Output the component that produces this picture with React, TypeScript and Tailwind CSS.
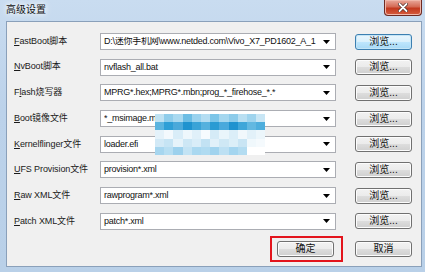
import React from 'react';

type Row = { label: string; key: number; value: string };

const rows: Row[] = [
  { label: 'FastBoot脚本', key: 0, value: 'D:\\迷你手机网\\www.netded.com\\Vivo_X7_PD1602_A_1' },
  { label: 'NvBoot脚本', key: 0, value: 'nvflash_all.bat' },
  { label: 'Flash烧写器', key: 1, value: 'MPRG*.hex;MPRG*.mbn;prog_*_firehose_*.*' },
  { label: 'Boot镜像文件', key: 0, value: '*_msimage.ml' },
  { label: 'Kernelflinger文件', key: 0, value: 'loader.efi' },
  { label: 'UFS Provision文件', key: 0, value: 'provision*.xml' },
  { label: 'Raw XML文件', key: 0, value: 'rawprogram*.xml' },
  { label: 'Patch XML文件', key: 0, value: 'patch*.xml' },
];

// mosaic over the blurred part of the picture
const mosaic = [
  ['#bfe2f3', '#8fcdeb', '#a9d9f0', '#6cbde4', '#9ad2ee', '#b4ddf2', '#7cc5e8', '#a5d7ef', '#8ccbea', '#b9dff2', '#9fd4ee', '#c8e6f5'],
  ['#5bb4df', '#2f9fd6', '#4aa9da', '#1f93cf', '#3aa3d7', '#55b1de', '#2a9bd3', '#49a9dc', '#1e92cf', '#3fa6d9', '#62b8e1', '#4eaedd'],
  ['#e4f2fa', '#f3f9fd', '#d9edf8', '#eef7fc', '#e0f0f9', '#f6fbfe', '#d5ebf7', '#e9f5fb', '#dbeef8', '#f1f8fc', '#e2f1f9', '#ecf6fb'],
  ['#d2e9f6', '#c6e4f4', '#e6f3fa', '#cde7f5', '#d9edf8', '#c2e2f3', '#e1f0f9', '#cfe8f5', '#dceff8', '#c9e5f4', '#f0f8fc', '#f5fafd'],
  ['#a7d6ef', '#b7def2', '#9dd1ed', '#c3e3f4', '#aad8f0', '#b0dbf1', '#a1d3ee', '#bde0f3', '#a4d5ef', '#b3dcf1', '#ffffff', '#ffffff'],
];

function Label({ text, k }: { text: string; k: number }) {
  return (
    <span className="w-[86px] shrink-0 whitespace-nowrap text-[9px] tracking-[-0.1px] text-[#1a1a1a]">
      {text.slice(0, k)}
      <span className="underline underline-offset-[1px]">{text[k]}</span>
      {text.slice(k + 1)}
    </span>
  );
}

function Combo({ value }: { value: string }) {
  return (
    <div className="flex h-[17px] w-[236px] shrink-0 items-center border border-[#abadb3] bg-white pl-[3px] pr-[5px]">
      <span className="flex-1 overflow-hidden whitespace-nowrap text-[9px] leading-none tracking-[-0.25px] text-[#111]">
        {value}
      </span>
      <svg width="7" height="4" viewBox="0 0 7 4" className="shrink-0">
        <path d="M0 0h7L3.5 4z" fill="#000" />
      </svg>
    </div>
  );
}

function WinButton({ text, focused }: { text: string; focused?: boolean }) {
  return (
    <div
      className={`flex h-[16px] w-[57px] shrink-0 items-center justify-center rounded-[3px] border text-[10px] leading-none text-[#111] ${
        focused
          ? 'border-[#3c7fb1] bg-[linear-gradient(to_bottom,#eaf6fd_0%,#d9f0fc_50%,#bee6fd_51%,#a7d9f5_100%)] shadow-[inset_0_0_0_1px_#c4e5f6]'
          : 'border-[#707070] bg-[linear-gradient(to_bottom,#f2f2f2_0%,#ebebeb_50%,#dddddd_51%,#cfcfcf_100%)] shadow-[inset_0_0_0_1px_#fcfcfc]'
      }`}
    >
      {text}
    </div>
  );
}

export default function App() {
  return (
    <div
      className="flex h-[272px] w-[425px] flex-col bg-[linear-gradient(to_bottom,#c9dcf0,#bcd2ea_40%,#b9d0e8)]"
      style={{ fontFamily: '"Liberation Sans", "Noto Sans CJK SC", sans-serif' }}
    >
      <div className="relative flex h-[21px] shrink-0 items-start">
        <span className="pl-[6px] pt-[5px] text-[10px] leading-none text-[#111] [text-shadow:0_0_5px_#fff,0_0_8px_#fff]">
          高级设置
        </span>
        <div className="absolute right-[3px] top-0 flex h-[16px] w-[38px] items-center justify-center rounded-b-[4px] border border-t-0 border-[#6e2a22] bg-[linear-gradient(to_bottom,#e9a99c,#d46a55_45%,#c3391f_55%,#d55c3e)] shadow-[inset_0_0_0_1px_#f0b7aa]">
          <svg width="10" height="9" viewBox="0 0 10 9">
            <path d="M1.5 1l7 7M8.5 1l-7 7" stroke="#4a2a26" strokeWidth="3.2" strokeLinecap="round" />
            <path d="M1.5 1l7 7M8.5 1l-7 7" stroke="#fff" strokeWidth="1.8" strokeLinecap="round" />
          </svg>
        </div>
      </div>

      <div className="relative mx-[6px] flex h-[246px] w-[416px] flex-col border border-[#8aa0ba] bg-[#f0f0f0] pl-[7px] pr-[9px] pt-[11px]">
        <div className="flex flex-col gap-[8.7px]">
          {rows.map((r, i) => (
            <div key={r.label} className="flex h-[17px] items-center">
              <Label text={r.label} k={r.key} />
              <Combo value={r.value} />
              <div className="ml-[19px]">
                <WinButton text="浏览..." focused={i === 0} />
              </div>
            </div>
          ))}
        </div>

        <div className="mt-[6px] flex items-center justify-end">
          <div className="border-2 border-[#e3141c] pb-[3px] pl-[5px] pr-[7px] pt-[3px]">
            <WinButton text="确定" />
          </div>
          <div className="ml-[12px]">
            <WinButton text="取消" />
          </div>
        </div>

        <div className="absolute left-[148px] top-[92px] grid grid-cols-[repeat(12,9.2px)] grid-rows-[repeat(5,8.2px)]">
          {mosaic.flat().map((c, i) => (
            <div key={i} style={{ backgroundColor: c }} />
          ))}
        </div>
      </div>
    </div>
  );
}
